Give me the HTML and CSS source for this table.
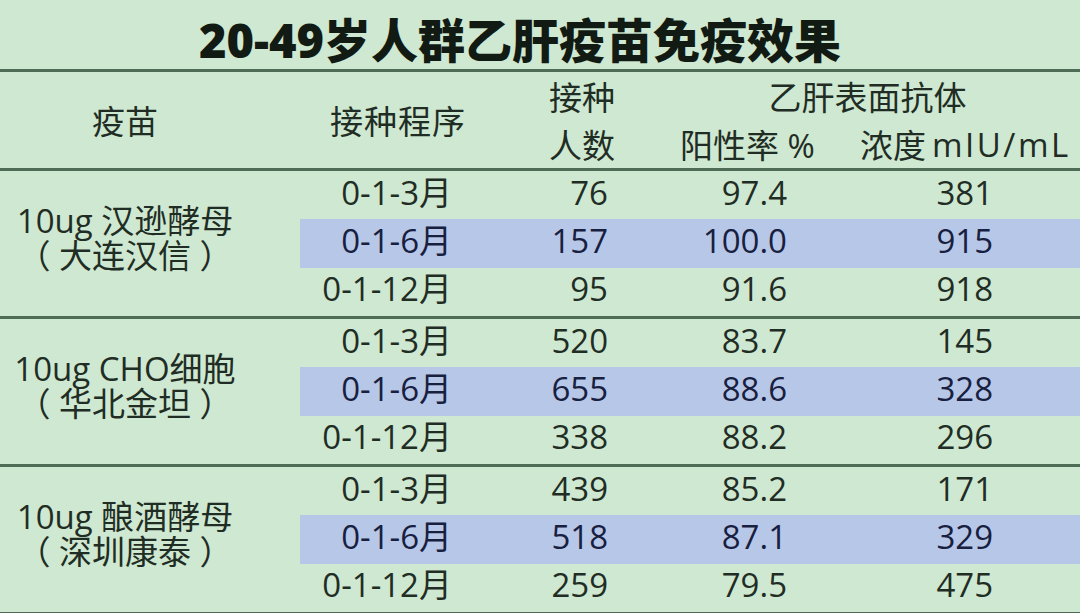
FILE: index.html
```html
<!DOCTYPE html>
<html lang="zh-CN">
<head>
<meta charset="utf-8">
<title>20-49岁人群乙肝疫苗免疫效果</title>
<link rel="stylesheet" href="styles.css">
</head>
<body>
<div class="page">
  <h1 class="title">20-49岁人群乙肝疫苗免疫效果</h1>
  <div class="rule"></div>
  <div class="grid head">
    <div class="h-vaccine">疫苗</div>
    <div class="h-sched">接种程序</div>
    <div class="h-count1">接种</div>
    <div class="h-anti">乙肝表面抗体</div>
    <div class="h-count2">人数</div>
    <div class="h-rate">阳性率 %</div>
    <div class="h-conc">浓度 <span class="unit">mIU/mL</span></div>
  </div>
  <div class="rule"></div>

  <div class="grid group">
    <div class="vaccine"><span>10ug 汉逊酵母</span><span>（ 大连汉信 ）</span></div>
    <div class="c sched">0-1-3月</div><div class="c count">76</div><div class="c rate">97.4</div><div class="c conc">381</div>
    <div class="c sched hl">0-1-6月</div><div class="c count hl">157</div><div class="c rate hl">100.0</div><div class="c conc hl">915</div>
    <div class="c sched">0-1-12月</div><div class="c count">95</div><div class="c rate">91.6</div><div class="c conc">918</div>
  </div>
  <div class="rule"></div>

  <div class="grid group">
    <div class="vaccine"><span>10ug CHO细胞</span><span>（ 华北金坦 ）</span></div>
    <div class="c sched">0-1-3月</div><div class="c count">520</div><div class="c rate">83.7</div><div class="c conc">145</div>
    <div class="c sched hl">0-1-6月</div><div class="c count hl">655</div><div class="c rate hl">88.6</div><div class="c conc hl">328</div>
    <div class="c sched">0-1-12月</div><div class="c count">338</div><div class="c rate">88.2</div><div class="c conc">296</div>
  </div>
  <div class="rule"></div>

  <div class="grid group">
    <div class="vaccine"><span>10ug 酿酒酵母</span><span>（ 深圳康泰 ）</span></div>
    <div class="c sched">0-1-3月</div><div class="c count">439</div><div class="c rate">85.2</div><div class="c conc">171</div>
    <div class="c sched hl">0-1-6月</div><div class="c count hl">518</div><div class="c rate hl">87.1</div><div class="c conc hl">329</div>
    <div class="c sched">0-1-12月</div><div class="c count">259</div><div class="c rate">79.5</div><div class="c conc">475</div>
  </div>
  <div class="rule"></div>
</div>
</body>
</html>
```

FILE: styles.css
```css
html, body {
  margin: 0;
  padding: 0;
}

body {
  background: #cfe8d1;
  font-family: "Open Sans", "Noto Sans CJK SC", sans-serif;
  color: #1f2d24;
}

.page {
  width: 1080px;
  height: 613px;
  overflow: hidden;
  background: #cfe8d1;
}

.title {
  margin: 0;
  height: 69px;
  box-sizing: border-box;
  padding: 6px 40px 0 0;
  display: flex;
  align-items: center;
  justify-content: center;
  font-family: "Open Sans", "Noto Sans CJK SC", sans-serif;
  font-size: 47px;
  font-weight: 800;
  color: #111a13;
}

.rule {
  height: 3px;
  background: #4e6c56;
}

.grid {
  display: grid;
  grid-template-columns: 300px 170px 155px 180px 275px;
  font-size: 33px;
}

.head {
  height: 96px;
  grid-template-rows: 48px 48px;
}

.head > div {
  display: flex;
  align-items: center;
  white-space: nowrap;
}

.h-vaccine {
  grid-column: 1;
  grid-row: 1 / 3;
  justify-content: center;
  padding-right: 50px;
}

.h-sched {
  grid-column: 2;
  grid-row: 1 / 3;
  padding-left: 30px;
  letter-spacing: 1px;
}

.h-count1 {
  grid-column: 3;
  grid-row: 1;
  justify-content: flex-end;
  padding-right: 10px;
}

.h-count2 {
  grid-column: 3;
  grid-row: 2;
  justify-content: flex-end;
  padding-right: 10px;
}

.h-anti {
  grid-column: 4 / 6;
  grid-row: 1;
  justify-content: center;
  padding-left: 30px;
}

.h-rate {
  grid-column: 4;
  grid-row: 2;
  padding-left: 55px;
}

.h-conc {
  grid-column: 5;
  grid-row: 2;
  padding-left: 55px;
}

.unit {
  margin-left: 6px;
  letter-spacing: 2.5px;
}

.group {
  height: 145px;
  grid-template-rows: repeat(3, minmax(0, 1fr));
}

.vaccine {
  grid-column: 1;
  grid-row: 1 / 4;
  display: flex;
  flex-direction: column;
  justify-content: center;
  align-items: center;
  padding: 0 50px 10px 0;
  line-height: 35px;
  white-space: pre;
}

.c {
  display: flex;
  align-items: center;
  justify-content: flex-end;
  white-space: nowrap;
  line-height: 40px;
  padding-bottom: 5px;
  box-sizing: border-box;
  min-height: 0;
}

.sched { padding-right: 18px; }
.count { padding-right: 17px; }
.rate  { padding-right: 18px; }
.conc  { padding-right: 87px; }

.hl {
  background: #b7c7e8;
  color: #17203f;
}
```
